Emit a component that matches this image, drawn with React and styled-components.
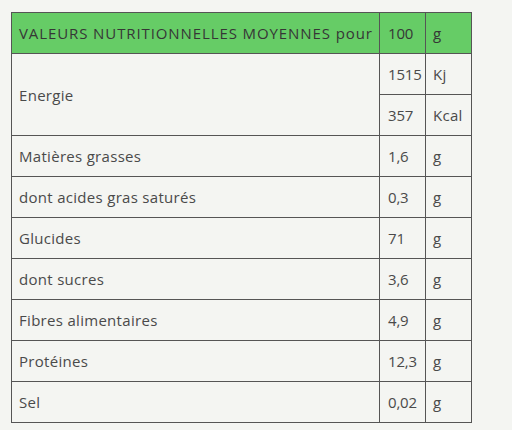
import React from 'react';
import styled, { createGlobalStyle } from 'styled-components';

const GlobalStyle = createGlobalStyle`
  html, body {
    margin: 0;
    padding: 0;
    background: #f4f5f2;
  }
`;

const Page = styled.div`
  padding: 12px 0 0 11px;
  font-family: 'Open Sans', 'DejaVu Sans', sans-serif;
  color: #4a4a4a;
`;

const Table = styled.table`
  border-collapse: collapse;
  width: 460px;
  table-layout: fixed;
  font-size: 15px;
  letter-spacing: 0.3px;
`;

const Cell = styled.td`
  border: 1px solid #555;
  height: 41px;
  padding: 0 0 0 ${(p) => (p.$num ? 8 : 7)}px;
  vertical-align: middle;
  white-space: nowrap;
  box-sizing: border-box;
  letter-spacing: ${(p) => (p.$num ? '-0.2px' : 'inherit')};
  background: ${(p) => (p.$head ? '#66cc66' : 'transparent')};
  color: ${(p) => (p.$head ? '#363636' : '#4a4a4a')};
`;

const HeadLabel = styled.span`
  letter-spacing: 0.9px;
`;

const rows = [
  ['Matières grasses', '1,6', 'g'],
  ['dont acides gras saturés', '0,3', 'g'],
  ['Glucides', '71', 'g'],
  ['dont sucres', '3,6', 'g'],
  ['Fibres alimentaires', '4,9', 'g'],
  ['Protéines', '12,3', 'g'],
  ['Sel', '0,02', 'g'],
];

export default function App() {
  return (
    <Page>
      <GlobalStyle />
      <Table>
        <colgroup>
          <col style={{ width: 368 }} />
          <col style={{ width: 46 }} />
          <col style={{ width: 46 }} />
        </colgroup>
        <tbody>
          <tr>
            <Cell $head>
              <HeadLabel>VALEURS NUTRITIONNELLES MOYENNES pour</HeadLabel>
            </Cell>
            <Cell $head $num>100</Cell>
            <Cell $head>g</Cell>
          </tr>
          <tr>
            <Cell rowSpan={2}>Energie</Cell>
            <Cell $num>1515</Cell>
            <Cell>Kj</Cell>
          </tr>
          <tr>
            <Cell $num>357</Cell>
            <Cell>Kcal</Cell>
          </tr>
          {rows.map(([label, value, unit]) => (
            <tr key={label}>
              <Cell>{label}</Cell>
              <Cell $num>{value}</Cell>
              <Cell>{unit}</Cell>
            </tr>
          ))}
        </tbody>
      </Table>
    </Page>
  );
}
